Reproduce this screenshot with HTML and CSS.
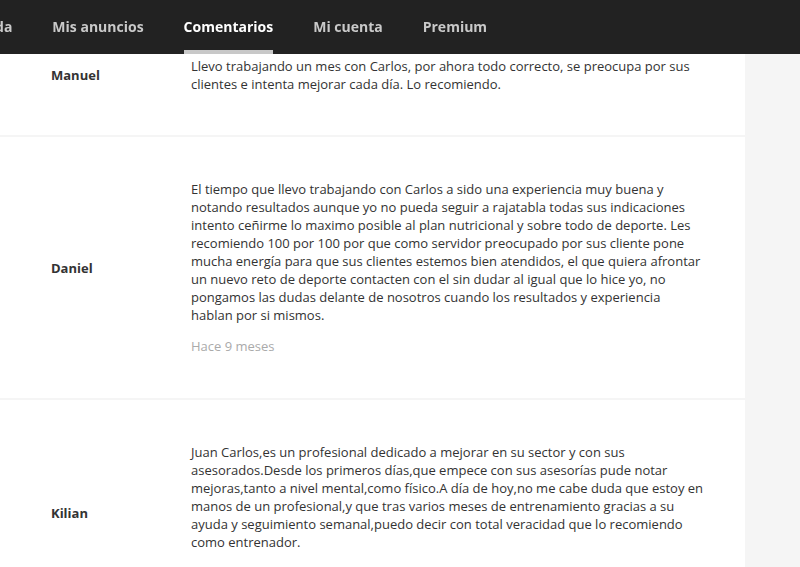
FILE: index.html
```html
<!DOCTYPE html>
<html lang="es">
<head>
<meta charset="utf-8">
<title>Comentarios</title>
<link rel="stylesheet" href="styles.css">
</head>
<body>
<header class="topbar">
  <nav class="nav">
    <a class="nav-item nav-first">Agenda</a>
    <a class="nav-item">Mis anuncios</a>
    <a class="nav-item active">Comentarios</a>
    <a class="nav-item">Mi cuenta</a>
    <a class="nav-item">Premium</a>
  </nav>
</header>
<main class="page">
  <section class="list">
    <article class="review">
      <div class="name">Manuel</div>
      <div class="body">
        <p class="text">Llevo trabajando un mes con Carlos, por ahora todo correcto, se preocupa por sus clientes e intenta mejorar cada día. Lo recomiendo.</p>
      </div>
    </article>
    <article class="review">
      <div class="name">Daniel</div>
      <div class="body">
        <p class="text">El tiempo que llevo trabajando con Carlos a sido una experiencia muy buena y notando resultados aunque yo no pueda seguir a rajatabla todas sus indicaciones intento ceñirme lo maximo posible al plan nutricional y sobre todo de deporte. Les recomiendo 100 por 100 por que como servidor preocupado por sus cliente pone mucha energía para que sus clientes estemos bien atendidos, el que quiera afrontar un nuevo reto de deporte contacten con el sin dudar al igual que lo hice yo, no pongamos las dudas delante de nosotros cuando los resultados y experiencia<br>hablan por si mismos.</p>
        <p class="date">Hace 9 meses</p>
      </div>
    </article>
    <article class="review">
      <div class="name">Kilian</div>
      <div class="body">
        <p class="text">Juan Carlos,es un profesional dedicado a mejorar en su sector y con sus asesorados.Desde los primeros días,que empece con sus asesorías pude notar mejoras,tanto a nivel mental,como físico.A día de hoy,no me cabe duda que estoy en manos de un profesional,y que tras varios meses de entrenamiento gracias a su ayuda y seguimiento semanal,puedo decir con total veracidad que lo recomiendo como entrenador.</p>
        <p class="date">Hace 9 meses</p>
      </div>
    </article>
  </section>
  <aside class="side"></aside>
</main>
</body>
</html>
```

FILE: styles.css
```css
* { box-sizing: border-box; }
html, body { margin: 0; padding: 0; }
body {
  font-family: "Open Sans", "Liberation Sans", sans-serif;
  color: #333;
  background: #f5f5f5;
  font-size: 13px;
  line-height: 18px;
  overflow: hidden;
}
.topbar {
  position: fixed;
  top: 0; left: 0; right: 0;
  height: 54px;
  background: #222;
  z-index: 10;
}
.nav {
  display: flex;
  gap: 40px;
  height: 54px;
  margin-left: -40px;
}
.nav-item {
  display: flex;
  align-items: center;
  height: 54px;
  padding-top: 3px;
  color: #c9c9c9;
  font-weight: 700;
  font-size: 14px;
  white-space: nowrap;
  border-bottom: 4px solid transparent;
}
.nav-item.active {
  color: #fff;
  border-bottom-color: #c8c8c8;
}
.page {
  display: flex;
  padding-top: 13px;
}
.list {
  width: 745px;
  display: flex;
  flex-direction: column;
  gap: 2px;
}
.review {
  background: #fff;
  display: flex;
  align-items: center;
  padding: 43px 0 43px 51px;
}
.review:first-child { padding-top: 44px; padding-bottom: 42px; }
.name {
  width: 140px;
  flex: none;
  font-weight: 700;
}
.body {
  width: 515px;
}
.text { margin: 0; }
.date {
  margin: 13px 0 0;
  color: #aaa;
}
.side { flex: 1; }
```
